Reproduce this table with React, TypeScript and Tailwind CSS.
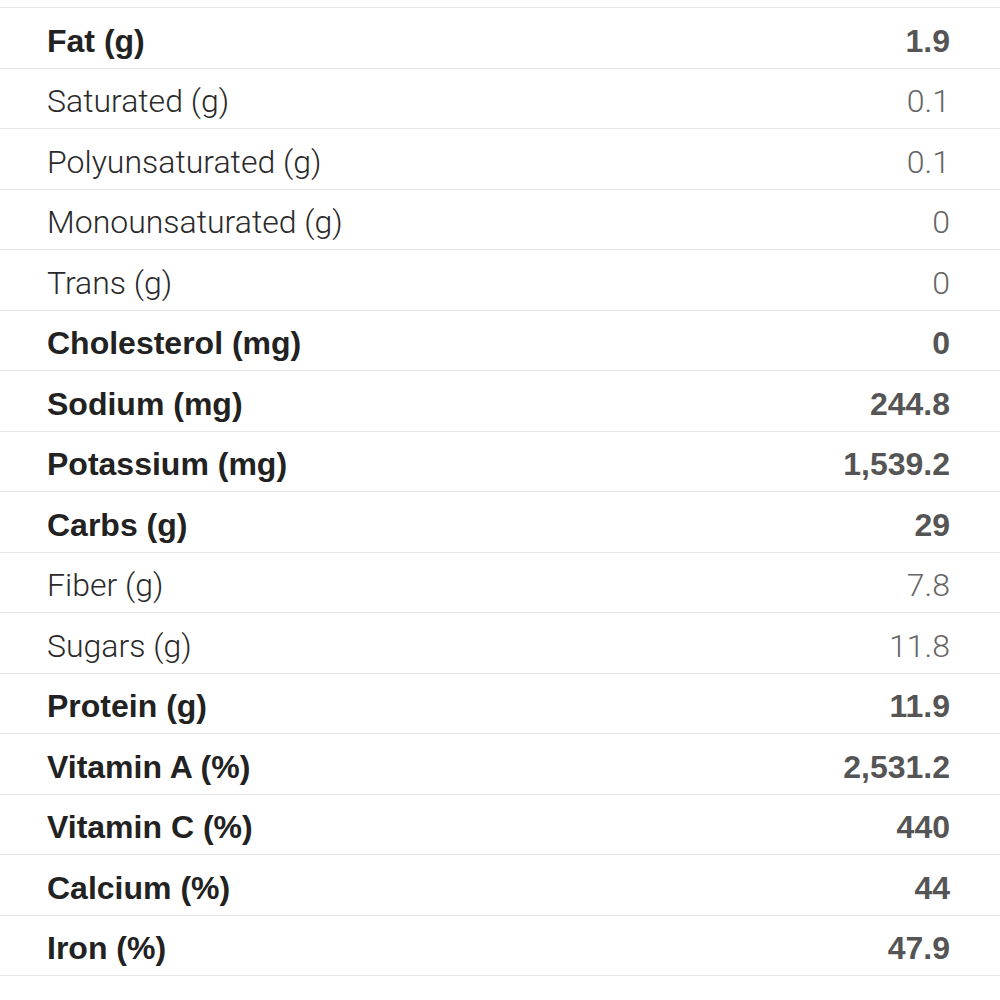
import React from "react";

type Row = { label: string; value: string; bold: boolean };

const rows: Row[] = [
  { label: "Fat (g)", value: "1.9", bold: true },
  { label: "Saturated (g)", value: "0.1", bold: false },
  { label: "Polyunsaturated (g)", value: "0.1", bold: false },
  { label: "Monounsaturated (g)", value: "0", bold: false },
  { label: "Trans (g)", value: "0", bold: false },
  { label: "Cholesterol (mg)", value: "0", bold: true },
  { label: "Sodium (mg)", value: "244.8", bold: true },
  { label: "Potassium (mg)", value: "1,539.2", bold: true },
  { label: "Carbs (g)", value: "29", bold: true },
  { label: "Fiber (g)", value: "7.8", bold: false },
  { label: "Sugars (g)", value: "11.8", bold: false },
  { label: "Protein (g)", value: "11.9", bold: true },
  { label: "Vitamin A (%)", value: "2,531.2", bold: true },
  { label: "Vitamin C (%)", value: "440", bold: true },
  { label: "Calcium (%)", value: "44", bold: true },
  { label: "Iron (%)", value: "47.9", bold: true },
];

function NutrientRow({ row }: { row: Row }) {
  const font = row.bold
    ? "font-['Liberation_Sans',Arial,sans-serif] font-bold"
    : "font-['Roboto',Arial,sans-serif] font-light";
  return (
    <div
      className={`flex h-[60.5px] items-center justify-between border-b-[1.5px] border-[#e4e4e4] pl-[47px] pr-[50px] pt-[6px] text-[32px] ${font}`}
    >
      <span className={row.bold ? "text-[#222]" : "text-[#2a2a2a]"}>{row.label}</span>
      <span className={row.bold ? "text-[#555]" : "text-[#666]"}>{row.value}</span>
    </div>
  );
}

export default function App() {
  return (
    <div className="min-h-screen w-full bg-white pt-[7px] font-['Liberation_Sans',Arial,sans-serif]">
      <div className="border-t-[1.5px] border-[#e4e4e4]">
        {rows.map((r) => (
          <NutrientRow key={r.label} row={r} />
        ))}
      </div>
    </div>
  );
}
